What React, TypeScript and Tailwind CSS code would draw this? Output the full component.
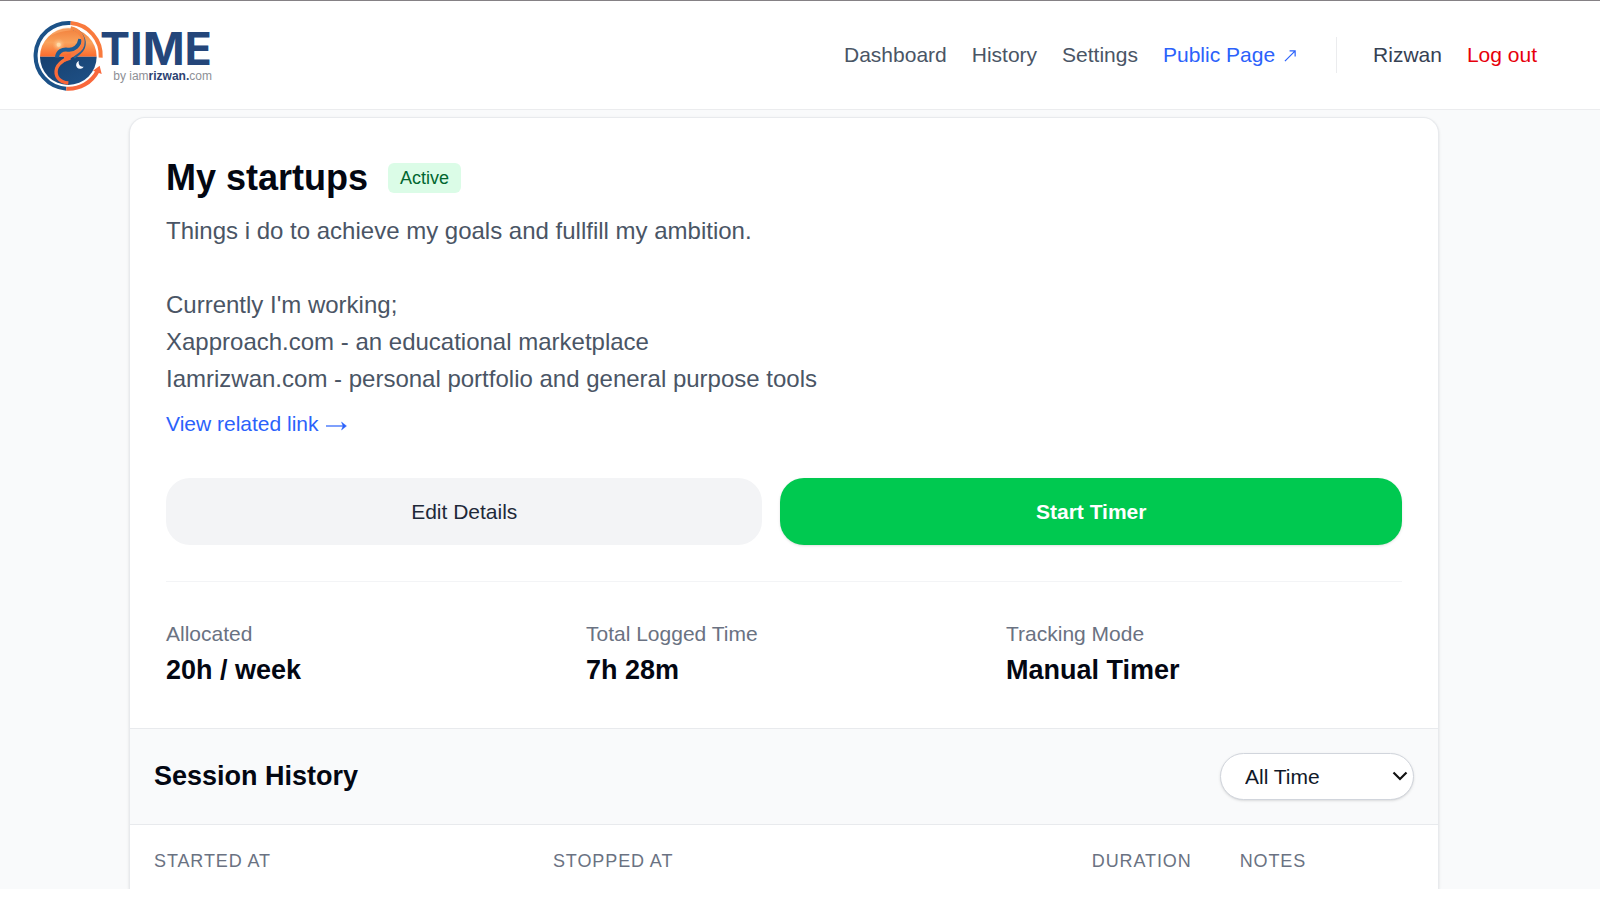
const navLinks = ['Dashboard', 'History', 'Settings'];

const stats = [
  { label: 'Allocated', value: '20h / week' },
  { label: 'Total Logged Time', value: '7h 28m' },
  { label: 'Tracking Mode', value: 'Manual Timer' },
];

function LogoMark() {
  return (
    <svg viewBox="39 54 213 219" className="h-[73px] w-[71px] shrink-0" aria-hidden="true">
      <defs>
        <linearGradient id="day" x1="0" y1="0" x2="0" y2="1">
          <stop offset="0" stopColor="#f2803c" />
          <stop offset="0.5" stopColor="#f9a25c" />
          <stop offset="1" stopColor="#fb6a2c" />
        </linearGradient>
        <linearGradient id="night" x1="0" y1="0" x2="1" y2="1">
          <stop offset="0" stopColor="#17406f" />
          <stop offset="1" stopColor="#1f5288" />
        </linearGradient>
        <linearGradient id="stream" gradientUnits="userSpaceOnUse" x1="150" y1="80" x2="150" y2="250">
          <stop offset="0" stopColor="#f58a45" />
          <stop offset="1" stopColor="#fb6236" />
        </linearGradient>
        <radialGradient id="glow">
          <stop offset="0" stopColor="#ffe0b0" />
          <stop offset="1" stopColor="#fbab6a" stopOpacity="0" />
        </radialGradient>
      </defs>
      <path d="M152 66A98 98 0 1 0 139 263" fill="none" stroke="#1c5288" strokeWidth="12" />
      <path d="M152 66A98 98 0 0 1 242 170" fill="none" stroke="#f97a3d" strokeWidth="12" />
      <path d="M139 263A98 98 0 0 0 233 210" fill="none" stroke="#f9683c" strokeWidth="12" />
      <path d="M239 194L245 219L219 209Z" fill="#f9683c" />
      <path d="M60 167A85 85 0 0 1 230 167Z" fill="url(#day)" />
      <path d="M60 167A85 85 0 0 0 230 167Z" fill="url(#night)" />
      <path d="M92 104C112 78 150 74 172 86C150 88 116 90 92 104Z" fill="#ffc28a" opacity="0.4" />
      <circle cx="116" cy="131" r="20" fill="url(#glow)" />
      <circle cx="116" cy="131" r="6" fill="#ffdca8" />
      <path d="M160 84C186 92 199 118 191 140C186 154 174 160 162 170" fill="none" stroke="#2a6090" strokeWidth="8" />
      <path d="M111 170C112 151 128 144 143 146C162 149 178 134 181 114" fill="none" stroke="#1e5c94" strokeWidth="12" />
      <path d="M152 81C180 87 193 110 188 132C183 151 166 156 148 168C132 178 116 184 110 202C103 225 117 243 145 246" fill="none" stroke="url(#stream)" strokeWidth="10" />
      <path d="M131 163L152 157L152 176L134 182Z" fill="#fb6b35" />
      <path d="M177 180A12 12 0 1 0 191 197A12 12 0 0 1 177 180Z" fill="#f5f8ff" />
    </svg>
  );
}

function Logo() {
  return (
    <a href="#home" className="flex items-center" aria-label="Time by iamrizwan.com">
      <LogoMark />
      <span className="-ml-1 flex flex-col items-end pt-0.5">
        <span className="font-['Inter',sans-serif] text-[45px] leading-10 font-bold text-[#24467a]">TIME</span>
        <span className="text-[12px] leading-[14px] text-[#8d9096]">
          by iam<b className="text-[#2c4272]">rizwan.</b>com
        </span>
      </span>
    </a>
  );
}

function Header() {
  return (
    <header className="border-t border-b border-t-[#858185] border-b-[#ebecee] bg-white">
      <div className="flex h-[108px] items-center justify-between pr-[63px] pl-[33px]">
        <Logo />
        <nav className="flex items-center gap-[25px] text-[21px] text-gray-600">
          {navLinks.map((label) => (
            <a key={label} href={`#${label.toLowerCase()}`}>
              {label}
            </a>
          ))}
          <a href="#public" className="flex items-center gap-[9px] text-[#2b62fb]">
            Public Page
            <svg viewBox="0 0 14 14" className="size-[13px]" fill="none" stroke="currentColor" strokeWidth="1.3" aria-hidden="true">
              <path d="M1 13L12 2M6 2H12V8" />
            </svg>
          </a>
          <div className="ml-3.5 flex h-9 items-center gap-[25px] border-l border-[#ebecee] pl-9">
            <span className="text-gray-700">Rizwan</span>
            <button type="button" className="text-[#e7000b]">
              Log out
            </button>
          </div>
        </nav>
      </div>
    </header>
  );
}

function Overview() {
  return (
    <section className="px-9 pt-[35px] pb-[38px]">
      <div className="flex items-center gap-5">
        <h1 className="text-[36px] leading-[50px] font-bold text-gray-950">My startups</h1>
        <span className="rounded-md bg-green-100 px-3 text-[18px] leading-[30px] text-green-800">Active</span>
      </div>
      <p className="mt-[9px] text-[24px] leading-[37px] whitespace-pre-line text-gray-600">
        {`Things i do to achieve my goals and fullfill my ambition.

Currently I'm working;
Xapproach.com - an educational marketplace
Iamrizwan.com - personal portfolio and general purpose tools`}
      </p>
      <a href="#related" className="mt-[11px] inline-flex items-center gap-[7px] text-[21px] leading-[32px] text-[#2b62fb]">
        View related link
        <svg viewBox="0 0 21 12" className="mt-1 h-3 w-[21px]" fill="none" stroke="currentColor" strokeWidth="1.2" aria-hidden="true">
          <path d="M0 6H19" />
          <path d="M15.5 2L20.5 6L15.5 10L17 6Z" fill="currentColor" strokeWidth="0.4" />
        </svg>
      </a>
      <div className="mt-[38px] grid grid-cols-[596fr_621fr] gap-[18px] text-[21px]">
        <button type="button" className="h-[67px] rounded-3xl bg-gray-100 text-gray-800">
          Edit Details
        </button>
        <button type="button" className="h-[67px] rounded-3xl bg-[#00c950] font-bold text-white shadow-sm">
          Start Timer
        </button>
      </div>
      <dl className="mt-9 grid grid-cols-3 gap-6 border-t border-gray-100 pt-9">
        {stats.map((stat) => (
          <div key={stat.label}>
            <dt className="text-[21px] leading-[32px] text-gray-500">{stat.label}</dt>
            <dd className="text-[27px] leading-[40px] font-bold text-gray-950">{stat.value}</dd>
          </div>
        ))}
      </dl>
    </section>
  );
}

function SessionHistory() {
  return (
    <section>
      <div className="flex h-[97px] items-center justify-between border-y border-[#e8eaed] bg-gray-50 px-6">
        <h2 className="text-[27px] font-bold text-gray-950">Session History</h2>
        <div className="relative">
          <select
            aria-label="Session period"
            className="h-[47px] w-[194px] appearance-none rounded-full border border-gray-300 bg-white pl-6 text-[21px] text-gray-900 shadow-sm"
          >
            <option>All Time</option>
            <option>This Week</option>
            <option>This Month</option>
          </select>
          <svg
            viewBox="0 0 16 10"
            className="pointer-events-none absolute top-[18px] right-1.5 h-2.5 w-4"
            fill="none"
            stroke="#111"
            strokeWidth="2.2"
            aria-hidden="true"
          >
            <path d="M1.5 1.5L8 8L14.5 1.5" />
          </svg>
        </div>
      </div>
      <table className="w-full table-fixed text-[18px] leading-6 tracking-wider text-gray-500 uppercase">
        <thead>
          <tr>
            <th scope="col" className="w-[30.5%] px-6 pt-6 pb-4 text-left font-normal">Started at</th>
            <th scope="col" className="px-6 pt-6 pb-4 text-left font-normal">Stopped at</th>
            <th scope="col" className="w-[22%] px-6 pt-6 pb-4 text-right font-normal">Duration</th>
            <th scope="col" className="w-[17%] px-6 pt-6 pb-4 text-left font-normal">Notes</th>
          </tr>
        </thead>
      </table>
    </section>
  );
}

export default function App() {
  return (
    <div className="flex min-h-screen flex-col bg-white pb-[11px] font-['Liberation_Sans',Arial,sans-serif]">
      <Header />
      <main className="flex flex-1 flex-col overflow-hidden bg-gray-50 pt-[7px] pr-8">
        <div className="mx-auto w-full max-w-[1310px] flex-1 rounded-t-2xl border border-b-0 border-[#e8eaed] bg-white shadow-sm">
          <Overview />
          <SessionHistory />
        </div>
      </main>
    </div>
  );
}
